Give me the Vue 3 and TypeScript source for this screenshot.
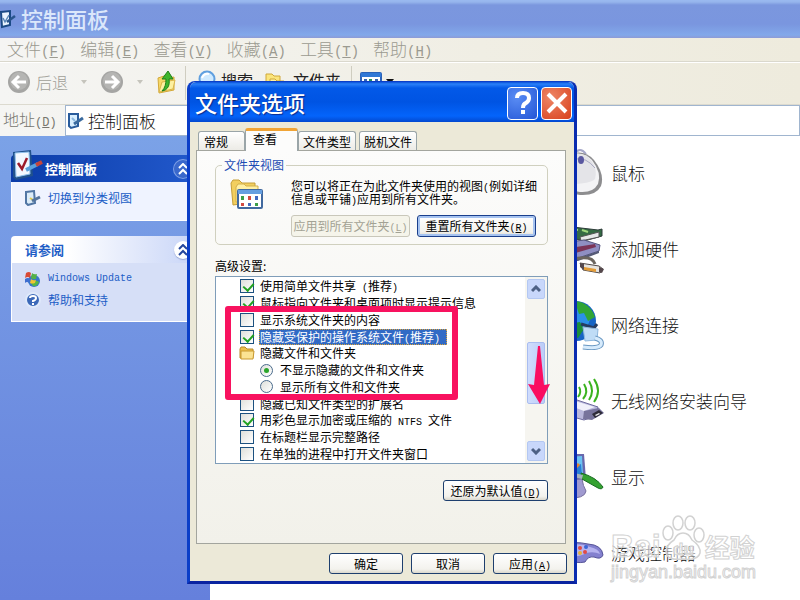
<script setup lang="ts">
import { ref } from 'vue'

interface Part { text: string; latin?: boolean }
interface Option {
  id: string
  kind: 'check' | 'radio' | 'folder'
  parts: Part[]
  checked?: boolean
  selected?: boolean
}

const menus = [
  { label: '文件', key: 'F' },
  { label: '编辑', key: 'E' },
  { label: '查看', key: 'V' },
  { label: '收藏', key: 'A' },
  { label: '工具', key: 'T' },
  { label: '帮助', key: 'H' },
]

const items = [
  { id: 'mouse', label: '鼠标' },
  { id: 'hardware', label: '添加硬件' },
  { id: 'network', label: '网络连接' },
  { id: 'wireless', label: '无线网络安装向导' },
  { id: 'display', label: '显示' },
  { id: 'game', label: '游戏控制器' },
]

const tabs = ['常规', '查看', '文件类型', '脱机文件']
const activeTab = ref('查看')

const options = ref<Option[]>([
  { id: 'share', kind: 'check', checked: true, parts: [{ text: '使用简单文件共享' }, { text: ' (', latin: true }, { text: '推荐' }, { text: ')', latin: true }] },
  { id: 'tips', kind: 'check', checked: true, parts: [{ text: '鼠标指向文件夹和桌面项时显示提示信息' }] },
  { id: 'system', kind: 'check', checked: false, parts: [{ text: '显示系统文件夹的内容' }] },
  { id: 'protected', kind: 'check', checked: true, selected: true, parts: [{ text: '隐藏受保护的操作系统文件' }, { text: '(', latin: true }, { text: '推荐' }, { text: ') ', latin: true }] },
  { id: 'hidden', kind: 'folder', parts: [{ text: '隐藏文件和文件夹' }] },
  { id: 'hide', kind: 'radio', parts: [{ text: '不显示隐藏的文件和文件夹' }] },
  { id: 'show', kind: 'radio', parts: [{ text: '显示所有文件和文件夹' }] },
  { id: 'ext', kind: 'check', checked: false, parts: [{ text: '隐藏已知文件类型的扩展名' }] },
  { id: 'ntfs', kind: 'check', checked: true, parts: [{ text: '用彩色显示加密或压缩的' }, { text: ' NTFS ', latin: true }, { text: '文件' }] },
  { id: 'path', kind: 'check', checked: false, parts: [{ text: '在标题栏显示完整路径' }] },
  { id: 'process', kind: 'check', checked: false, parts: [{ text: '在单独的进程中打开文件夹窗口' }] },
])
const hiddenMode = ref('hide')
const address = ref('控制面板')
</script>

<template>
  <div class="desktop">
    <header class="titlebar">
      <svg class="title-icon" viewBox="0 0 16 20">
        <path d="M1 3 L10 2 V16 L2 18 Z" fill="#eaf4ff" stroke="#1b4a86" stroke-width="2" />
        <path d="M3 9 L5 13 L9 6" fill="none" stroke="#5b87b8" stroke-width="1.5" />
        <path d="M7 13 L15 7" stroke="#28548c" stroke-width="2.5" />
      </svg>
      <h1>控制面板</h1>
    </header>

    <nav class="menubar">
      <button v-for="m in menus" :key="m.key" type="button">{{ m.label }}<span class="latin">(<u>{{ m.key }}</u>)</span></button>
    </nav>

    <div class="toolbar">
      <button class="tool back" type="button" aria-label="后退">
        <svg width="24" height="24" viewBox="0 0 24 24">
          <circle cx="12" cy="12" r="11" fill="#a5a5a3" /><circle cx="12" cy="11" r="9" fill="#b5b5b3" />
          <path d="M19 12 H7 M12 6 L6 12 L12 18" fill="none" stroke="#fff" stroke-width="3" />
        </svg>
        <span>后退</span>
      </button>
      <i class="caret"></i>
      <button class="tool forward" type="button" aria-label="前进">
        <svg width="24" height="24" viewBox="0 0 24 24">
          <circle cx="12" cy="12" r="11" fill="#a5a5a3" /><circle cx="12" cy="11" r="9" fill="#b5b5b3" />
          <path d="M5 12 H17 M12 6 L18 12 L12 18" fill="none" stroke="#fff" stroke-width="3" />
        </svg>
      </button>
      <i class="caret"></i>
      <button class="tool up" type="button" aria-label="向上">
        <svg width="22" height="24" viewBox="0 0 22 24">
          <path d="M2 8 L8 6 L10 8 L18 7 V20 L3 23 Z" fill="#f6d867" stroke="#d3a93a" />
          <path d="M3 22 L6 12 L19 10 L17 19 Z" fill="#fdf0a0" stroke="#dbb548" />
          <path d="M6 21 C12 20 14 15 13 9 L17 9 L12 1 L6 9 L10 9 C10 14 9 18 6 21 Z" fill="#3db52c" stroke="#1f7f1b" />
        </svg>
      </button>
      <i class="divider"></i>
      <button class="tool dark" type="button">
        <svg width="18" height="24" viewBox="0 0 18 24">
          <circle cx="9" cy="9" r="7.5" fill="#cfeaff" stroke="#5f9fdf" stroke-width="2" />
          <path d="M4 8 Q6 3 11 4" stroke="#fff" stroke-width="2" fill="none" />
          <path d="M5 15 L1 22" stroke="#7a6a50" stroke-width="3" />
        </svg>
        <span>搜索</span>
      </button>
      <button class="tool dark folders" type="button">
        <svg width="20" height="20" viewBox="0 0 20 20">
          <path d="M1 2 H7 L9 4 H15 V14 H1 Z" fill="#fbe57c" stroke="#d0a83a" />
          <path d="M5 7 H10 L12 9 H19 V18 H5 Z" fill="#fff0a0" stroke="#d0a83a" />
        </svg>
        <span>文件夹</span>
      </button>
      <i class="divider wide"></i>
      <button class="tool view" type="button" aria-label="视图">
        <svg width="22" height="20" viewBox="0 0 22 20">
          <rect x="1" y="1" width="20" height="18" rx="1" fill="#fff" stroke="#2a62b8" stroke-width="2" />
          <rect x="1" y="1" width="20" height="4" fill="#2f78d6" />
          <path d="M4 7h3v4H4zM15 7h3v4h-3z" fill="#3565b0" /><path d="M9 7h3v4H9z" fill="#25905a" />
          <path d="M4 13h3v3H4zM9 13h3v3H9zM15 13h3v3h-3z" fill="#777" />
        </svg>
      </button>
      <i class="caret solid"></i>
    </div>

    <div class="addressbar">
      <label for="address">地址<span class="latin">(<u>D</u>)</span></label>
      <div class="address-field">
        <svg width="18" height="18" viewBox="0 0 18 18">
          <path d="M2 2 H11 V14 L4 16 L2 14 Z" fill="#d9efff" stroke="#285b9c" stroke-width="2" />
          <path d="M7 12 L16 6" stroke="#3a6a9e" stroke-width="3" />
          <path d="M5 6 L8 9" stroke="#8bb7df" stroke-width="2" />
        </svg>
        <input id="address" v-model="address" type="text" />
      </div>
    </div>

    <div class="content">
      <aside class="sidebar">
        <section class="panel primary">
          <header>
            <svg class="panel-icon" width="34" height="34" viewBox="0 0 34 34">
              <path d="M2 4 L20 2 L22 28 L5 32 L2 29 Z" fill="#21528c" />
              <path d="M4 5 L18 4 L19 26 L5 29 Z" fill="#f2f8ff" stroke="#8fc0ec" />
              <path d="M7 15 L11 21 L16 10" fill="none" stroke="#9c1c2c" stroke-width="2.5" />
              <path d="M15 22 L27 16" stroke="#5aa1dc" stroke-width="4" />
              <path d="M25 17 L31 14" stroke="#c4453a" stroke-width="4" />
            </svg>
            <h2>控制面板</h2>
            <button class="collapse" type="button" aria-label="折叠">
              <svg width="10" height="12" viewBox="0 0 10 12"><path d="M1 5 L5 1 L9 5 M1 11 L5 7 L9 11" fill="none" stroke="currentColor" stroke-width="2" /></svg>
            </button>
          </header>
          <div class="links">
            <a href="#">
              <svg width="16" height="16" viewBox="0 0 16 16">
                <path d="M1 2 L9 1 L10 13 L3 15 L1 13 Z" fill="#dcecf8" stroke="#5176a4" stroke-width="2" />
                <path d="M5 8 L8 10" stroke="#e0c850" stroke-width="2" /><path d="M7 11 L15 7" stroke="#54749c" stroke-width="3" />
              </svg>
              <span>切换到分类视图</span>
            </a>
          </div>
        </section>

        <section class="panel">
          <header>
            <h2>请参阅</h2>
            <button class="collapse" type="button" aria-label="折叠">
              <svg width="10" height="12" viewBox="0 0 10 12"><path d="M1 5 L5 1 L9 5 M1 11 L5 7 L9 11" fill="none" stroke="currentColor" stroke-width="2" /></svg>
            </button>
          </header>
          <div class="links">
            <a href="#">
              <svg width="16" height="16" viewBox="0 0 16 16">
                <circle cx="9" cy="10" r="6" fill="#3977c9" /><path d="M6 12 Q10 8 14 11 Q12 16 8 15Z" fill="#55b848" />
                <path d="M1 2 Q4 0 6 2 L5 7 Q3 5 0 7 Z" fill="#d94a35" /><path d="M7 2 Q9 4 12 3 L11 8 Q8 9 6 7 Z" fill="#56b146" />
                <path d="M0 8 Q3 6 5 8 L4 12 Q2 10 0 12 Z" fill="#3f6fd0" /><path d="M6 8 Q8 10 11 9 L10 12 Q7 13 5 12 Z" fill="#f2c431" />
              </svg>
              <span class="latin">Windows Update</span>
            </a>
            <a href="#">
              <svg width="16" height="16" viewBox="0 0 16 16">
                <circle cx="8" cy="8" r="7" fill="#3b68b8" stroke="#dfe9fa" stroke-width="2" />
                <path d="M5 6 Q5 4 8 4 Q11 4 11 6 Q11 8 8 9 V10 M8 11 V13" fill="none" stroke="#fff" stroke-width="2" />
              </svg>
              <span>帮助和支持</span>
            </a>
          </div>
        </section>
      </aside>

      <main class="tiles">
        <a v-for="item in items" :key="item.id" class="tile" href="#">
          <svg width="44" height="50" viewBox="0 0 44 50">
            <g v-if="item.id === 'mouse'">
              <path d="M14 6 Q20 -2 26 6" fill="none" stroke="#a4a6c8" stroke-width="2" />
              <path d="M2 10 Q22 -2 34 12 Q45 26 41 38 Q36 48 20 47 Q6 45 2 36 Z" fill="#8d8d8f" />
              <path d="M2 10 Q21 0 32 12 Q42 25 38 36 Q33 45 20 44 Q6 42 2 34 Z" fill="#f3f3f5" />
              <path d="M10 8 Q22 2 31 12 Q38 22 35 31 Q30 36 10 36 Z" fill="#e4e4e8" />
              <path d="M16 11 Q26 9 35 20" fill="none" stroke="#aaaac4" />
              <ellipse cx="21" cy="12" rx="3" ry="4" fill="#5a58a0" />
            </g>
            <g v-else-if="item.id === 'hardware'">
              <path d="M4 2 L38 6 L42 5 V12 L24 17 L4 12 Z" fill="#356b44" stroke="#2d3b38" />
              <path d="M20 13 L39 8 V13 L21 17 Z" fill="#e6e8e8" stroke="#555" />
              <path d="M12 5 L18 6 M22 6 L28 8" stroke="#9ed67e" stroke-width="2" />
              <path d="M2 19 L24 16 L40 21 L39 27 L18 34 L2 34 Z" fill="#8f8fc2" stroke="#55557f" />
              <path d="M10 24 L35 20 L36 23 L12 30 Z" fill="#7b3457" /><path d="M2 33 L18 34 L39 27 V29 L18 37 L2 36Z" fill="#555a76" />
              <path d="M10 36 Q32 30 35 40" fill="none" stroke="#6c665f" stroke-width="3" />
              <path d="M20 39 L39 42 L43 45 L40 49 L23 46 Z" fill="#e6e4df" stroke="#514a48" />
              <path d="M24 43 L36 45 V48 L24 46 Z" fill="#e29b37" /><path d="M20 39 L24 40 V46 L20 43 Z M39 43 L44 45 L42 49 L39 48Z" fill="#55484c" />
            </g>
            <g v-else-if="item.id === 'network'">
              <circle cx="16" cy="21" r="20" fill="#1664c4" /><circle cx="14" cy="17" r="16" fill="#2b91e8" />
              <path d="M16 1 Q30 3 35 17 L28 21 L24 13 L19 14 L17 8 Z" fill="#31a536" /><path d="M7 24 L20 22 L24 29 L18 38 L10 36Z" fill="#1b8e3c" />
              <path d="M21 24 L34 28 L37 24" fill="none" stroke="#263c60" stroke-width="3" />
              <path d="M23 27 L38 29 L37 40 L25 41 Z" fill="#bfdcf6" stroke="#8fb8de" />
              <path d="M35 38 Q43 40 41 45 Q38 49 23 47" fill="none" stroke="#6997c2" stroke-width="5" />
              <path d="M35 38 Q43 40 41 45 Q38 49 23 47" fill="none" stroke="#d7ebfc" stroke-width="3" />
            </g>
            <g v-else-if="item.id === 'wireless'">
              <path d="M19 11 Q22 16 18 21 M24 8 Q29 16 23 23 M29 5 Q35 15 29 24 M34 3 Q42 15 34 26" fill="none" stroke="#3bb31f" stroke-width="2" />
              <path d="M2 26 L14 23 L38 31 L36 40 L24 44 L2 38 Z" fill="#b9b8dc" stroke="#6d6a9e" />
              <path d="M3 27 L15 25 L35 31 L24 35 Z" fill="#f0f0fa" />
              <path d="M24 35 L39 32 L44 37 L32 44 L23 43 Z" fill="#77749c" />
              <path d="M32 38 L39 34 L43 37 L35 42 Z" fill="#2e2c38" /><path d="M35 39 L39 37 L40 38 L36 40 Z" fill="#eee" />
            </g>
            <g v-else-if="item.id === 'display'">
              <path d="M5 2 L24 2 L26 27 L5 30 Z" fill="#6868ad" /><path d="M5 5 L22 4 L23 24 L5 26 Z" fill="#6cc3f2" />
              <path d="M15 15 L21 12 L22 23 L15 24 Z" fill="#2880d7" /><path d="M16 15 L19 12" stroke="#e9842f" stroke-width="3" />
              <path d="M8 28 L22 27 Q23 34 26 39 Q25 47 7 46 Z" fill="#a09ad0" stroke="#77709f" />
              <path d="M21 21 Q36 25 43 35 Q42 38 38 36 L22 27 Z" fill="#35a231" stroke="#176b20" />
              <path d="M14 21 L23 23 L22 27 L14 25 Z" fill="#a6b3b9" />
            </g>
            <g v-else>
              <path d="M3 16 Q14 13 28 16 Q42 17 43 27 Q41 32 34 29 Q28 28 25 34 Q16 36 3 31 Z" fill="#8481cf" stroke="#555397" />
              <path d="M4 18 Q20 14 30 19 Q39 21 40 26 Q34 23 26 25 Q20 30 4 27 Z" fill="#b6b3ef" />
              <circle cx="20" cy="20" r="2" fill="#e24b45" /><circle cx="26" cy="19" r="2" fill="#3c66d6" />
              <circle cx="25" cy="24" r="2" fill="#e24b45" /><circle cx="20" cy="25" r="2" fill="#e6b23b" />
            </g>
          </svg>
          <span>{{ item.label }}</span>
        </a>
      </main>
    </div>

    <div class="watermark">
      <div class="brand">
        <span>Bai</span>
        <svg width="44" height="48" viewBox="0 0 44 48">
          <g fill="#fff" fill-opacity="0.5" stroke="#d2d2d2" stroke-width="1.5">
            <ellipse cx="7" cy="19" rx="5" ry="7" /><ellipse cx="17" cy="9" rx="5" ry="7" />
            <ellipse cx="29" cy="9" rx="5" ry="7" /><ellipse cx="38" cy="21" rx="5" ry="7" />
            <path d="M22 19 Q28 19 31 26 Q40 32 39 39 Q37 47 22 45 Q6 47 5 38 Q5 31 13 26 Q16 19 22 19 Z" />
          </g>
          <text x="12" y="41" font-size="17">du</text>
        </svg>
        <span class="cjk">经验</span>
      </div>
      <div class="site">jingyan.baidu.com</div>
    </div>

    <div class="dialog" role="dialog" aria-labelledby="dialog-title">
      <header class="dialog-title">
        <h2 id="dialog-title">文件夹选项</h2>
        <button class="caption" type="button" aria-label="帮助">
          <svg width="28" height="28" viewBox="0 0 28 28">
            <path d="M8 9 Q8 4 14 4 Q20 4 20 9 Q20 12 17 14 Q14 15 14 19 M14 21 V25" fill="none" stroke="#fff" stroke-width="4" />
          </svg>
        </button>
        <button class="caption close" type="button" aria-label="关闭">
          <svg width="28" height="28" viewBox="0 0 28 28"><path d="M5 5 L23 23 M23 5 L5 23" stroke="#fff" stroke-width="4" /></svg>
        </button>
      </header>

      <div class="dialog-body">
        <div class="tabs" role="tablist">
          <button
            v-for="t in tabs" :key="t" type="button" role="tab"
            :class="{ active: t === activeTab }" :aria-selected="t === activeTab" @click="activeTab = t"
          >{{ t }}</button>
        </div>

        <div class="page" role="tabpanel">
          <fieldset>
            <legend>文件夹视图</legend>
            <svg class="views" width="34" height="32" viewBox="0 0 34 32">
              <path d="M1 4 L3 1 H9 L12 4 H25 V23 L3 26 Z" fill="#f2cf5f" stroke="#c59e38" />
              <path d="M6 8 L8 5 H14 L16 7 H28 V23 H6 Z" fill="#fff0a4" stroke="#d3b04c" />
              <rect x="8" y="11" width="24" height="18" rx="1" fill="#fff" stroke="#41699f" stroke-width="2" />
              <rect x="8" y="11" width="24" height="4" fill="#669fe0" />
              <path d="M11 17h3v4h-3zM25 24h3v3h-3z" fill="#3e9e49" /><path d="M18 17h3v4h-3zM11 24h3v3h-3z" fill="#d24a42" /><path d="M25 17h3v4h-3zM18 24h3v3h-3z" fill="#4169c0" />
            </svg>
            <div class="view-info">
              <p>您可以将正在为此文件夹使用的视图<span class="latin">(</span>例如详细信息或平铺<span class="latin">)</span>应用到所有文件夹。</p>
              <div class="view-buttons">
                <button class="xp" type="button" disabled>应用到所有文件夹<span class="latin">(<u>L</u>)</span></button>
                <button class="xp focus" type="button">重置所有文件夹<span class="latin">(<u>R</u>)</span></button>
              </div>
            </div>
          </fieldset>

          <h3>高级设置:</h3>
          <div class="listbox">
            <ul>
              <li v-for="o in options" :key="o.id" :class="o.kind">
                <input v-if="o.kind === 'check'" :id="o.id" v-model="o.checked" type="checkbox" />
                <input v-else-if="o.kind === 'radio'" :id="o.id" v-model="hiddenMode" type="radio" name="hidden-files" :value="o.id" />
                <svg v-else width="16" height="14" viewBox="0 0 16 14">
                  <path d="M1 12 V3 L2 1 H6 L8 3 H14 V12 Z" fill="#edc04c" stroke="#b8892b" />
                  <path d="M2 5 H15 L14 13 H2 Z" fill="#fbe393" stroke="#c8982f" />
                </svg>
                <component :is="o.kind === 'folder' ? 'span' : 'label'" :for="o.kind === 'folder' ? undefined : o.id" :class="['caption-text', { selected: o.selected }]"><span v-for="(p, i) in o.parts" :key="i" :class="{ latin: p.latin }">{{ p.text }}</span></component>
              </li>
            </ul>
            <div class="scrollbar">
              <button type="button" aria-label="向上滚动"><svg width="10" height="8" viewBox="0 0 10 8"><path d="M1 6 L5 2 L9 6" fill="none" stroke="#4d6185" stroke-width="3" /></svg></button>
              <div class="track"><div class="thumb"></div></div>
              <button type="button" aria-label="向下滚动"><svg width="10" height="8" viewBox="0 0 10 8"><path d="M1 2 L5 6 L9 2" fill="none" stroke="#4d6185" stroke-width="3" /></svg></button>
            </div>
            <div class="highlight"></div>
            <svg class="arrow" width="22" height="58" viewBox="0 0 22 58">
              <path d="M10 0 H12 L16 39 L22 38 L12 58 L0 38 L6 39 Z" fill="#fa0d61" />
            </svg>
          </div>
          <button class="xp restore" type="button">还原为默认值<span class="latin">(<u>D</u>)</span></button>
        </div>

        <footer>
          <button class="xp" type="button">确定</button>
          <button class="xp" type="button">取消</button>
          <button class="xp" type="button">应用<span class="latin">(<u>A</u>)</span></button>
        </footer>
      </div>
    </div>
  </div>
</template>

<style>
body { margin: 0; }
</style>

<style scoped>
* { box-sizing: border-box; }
.desktop {
  position: relative;
  display: flex;
  flex-direction: column;
  min-height: 100vh;
  overflow: hidden;
  background: #fff;
  font-family: "Noto Sans CJK SC", sans-serif;
  font-size: 12px;
  color: #000;
}
button {
  margin: 0;
  padding: 0;
  border: 0;
  background: none;
  font: inherit;
  color: inherit;
  white-space: nowrap;
}
h1, h2, h3, p, ul { margin: 0; padding: 0; font-weight: normal; }
a { color: inherit; text-decoration: none; }
svg { flex: none; }
.latin { font-family: "Liberation Mono", monospace; font-size: 10px; line-height: 1; white-space: pre; }

.titlebar {
  display: flex;
  align-items: center;
  gap: 5px;
  height: 38px;
  background: linear-gradient(#9abaf0 0, #96b5ec 2px, #7b97de 5px, #7a96df 24px, #82a8ea 35px, #8d9bd6 38px);
}
.title-icon { width: 16px; height: 20px; }
.titlebar h1 { font-size: 22px; line-height: 34px; padding-bottom: 2px; font-weight: 500; color: #dbe7fb; }

.menubar, .toolbar, .addressbar { background: linear-gradient(90deg, #f5f5f3, #f0eee4 60%, #eeebdd); }
.menubar {
  display: flex;
  align-items: center;
  gap: 14px;
  height: 24px;
  padding: 0 0 2px 7px;
  border-bottom: 1px solid #dad8cd;
  font-size: 17px;
  line-height: 20px;
  font-weight: 300;
  color: #9b9a90;
}
.menubar .latin { font-size: 14px; }

.toolbar {
  display: flex;
  align-items: center;
  height: 42px;
  padding: 0 0 4px 7px;
  border-top: 1px solid #fff;
  font-size: 16px;
  line-height: 20px;
  font-weight: 300;
  color: #a09f97;
}
.tool { display: flex; align-items: center; gap: 5px; }
.caret { width: 0; height: 0; margin: 0 13px; border: 3px solid transparent; border-top: 4px solid #c5c4bc; border-bottom: 0; }
.caret.solid { margin: 0 4px; border-width: 4px; border-top: 5px solid #111; border-bottom: 0; }
.divider { align-self: stretch; margin: 3px 8px 0 7px; border-left: 1px solid #cfcdc0; }
.divider.wide { margin-left: 10px; }
.dark { margin-left: 4px; color: #222; }
.dark span { font-weight: 400; padding-bottom: 4px; }
.folders { margin-left: 12px; gap: 8px; }

.addressbar {
  display: flex;
  align-items: stretch;
  height: 32px;
  border-top: 1px solid #dcdacf;
  font-size: 17px;
  font-weight: 300;
}
.addressbar label { padding-left: 3px; line-height: 28px; color: #77766f; font-size: 16px; width: 65px; white-space: nowrap; }
.addressbar label .latin { font-size: 12px; }
.address-field {
  display: flex;
  flex: 1;
  align-items: center;
  gap: 3px;
  padding-left: 1px;
  border: 1px solid #a0b5cf;
  background: #fff;
}
.address-field input { flex: 1; min-width: 0; padding: 0; border: 0; outline: 0; background: none; font: inherit; color: #111; }

.content { display: flex; flex: 1; }
.sidebar {
  flex: 0 0 210px;
  padding: 19px 12px 0 11px;
  background: linear-gradient(#7ba2e7, #6580dc);
}
.panel { margin-bottom: 15px; }
.panel header {
  display: flex;
  align-items: center;
  height: 27px;
  padding: 0 6px 0 14px;
  border-radius: 4px 4px 0 0;
  background: linear-gradient(90deg, #fff 30%, #c7d4f7);
  color: #215dc6;
}
.panel h2 { flex: 1; font-size: 13px; font-weight: 700; }
.panel.primary header { padding-left: 0; background: linear-gradient(90deg, #0b3ca8, #2259cc); color: #fff; }
.panel-icon { margin-top: -8px; }
.collapse { display: grid; place-items: center; width: 18px; height: 18px; border-radius: 50%; background: #fff; color: #24469c; box-shadow: 0 1px 1px #99a8d8; }
.primary .collapse { background: #3a68cc; color: #fff; box-shadow: 0 0 0 1px #7f9fe4; }
.links { display: flex; flex-direction: column; gap: 5px; padding: 8px 13px 13px; border: 1px solid #fff; border-top: 0; background: #d6dff7; color: #215dc6; }
.primary .links { background: #eff3ff; padding-bottom: 14px; }
.links a { display: flex; align-items: center; gap: 7px; height: 16px; line-height: 16px; }

.tiles { flex: 1; margin-top: -1px; padding-left: 350px; }
.tile { display: flex; align-items: center; gap: 7px; height: 76px; font-size: 17px; line-height: 22px; font-weight: 300; color: #111; white-space: nowrap; }

.watermark { position: absolute; right: 44px; bottom: 18px; font-family: "Liberation Sans", sans-serif; color: rgba(255, 255, 255, 0.6); -webkit-text-stroke: 1px #d2d2d2; }
.brand { display: flex; align-items: flex-end; font-size: 32px; line-height: 32px; font-weight: 700; }
.brand text { fill: #fff; fill-opacity: 0.6; stroke: #d2d2d2; stroke-width: 1px; }
.brand .cjk { font-family: "Noto Sans CJK SC", sans-serif; font-size: 25px; }
.site { font-size: 18px; line-height: 20px; }

.dialog {
  position: absolute;
  left: 187px;
  top: 81px;
  width: 390px;
  border: 3px solid #0b3ec8;
  border-top-width: 1px;
  border-right-color: #0a2cb0;
  border-bottom-color: #0a24a0;
  border-radius: 8px 8px 0 0;
  background: #ece9d8;
}
.dialog-title {
  display: flex;
  align-items: center;
  gap: 3px;
  height: 40px;
  padding: 2px 2px 0 5px;
  border-radius: 6px 6px 0 0;
  background: linear-gradient(#0a50d8 0, #2a80f8 2px, #0359e8 6px, #0054e3 20px, #0464fb 34px, #0348cf 40px);
}
.dialog-title h2 { flex: 1; padding-bottom: 3px; font-size: 22px; line-height: 34px; font-weight: 500; color: #fff; text-shadow: 1px 1px 1px #0a2c90; }
.caption { width: 31px; height: 33px; display: grid; place-items: center; border: 1px solid #fff; border-radius: 4px; background: radial-gradient(circle at 30% 30%, #5a8df4, #2355d6); }
.caption.close { background: radial-gradient(circle at 30% 30%, #ee8666, #d8401c); }

.dialog-body { padding: 6px 8px 7px 6px; }
.tabs { display: flex; align-items: flex-end; height: 22px; padding-left: 2px; }
.tabs button {
  position: relative;
  height: 19px;
  margin-right: 3px;
  padding: 0 4px;
  border: 1px solid #9aa5a8;
  border-bottom: 0;
  border-radius: 3px 3px 0 0;
  background: linear-gradient(#fff, #ecebe6);
  line-height: 17px;
}
.tabs button:first-child { margin-right: 0; padding: 0 16px 0 5px; }
.tabs button.active { z-index: 1; height: 23px; margin: 0 0 -1px; padding: 0 20px 5px 7px; border-top: 3px solid #f0a436; background: #fcfcfb; line-height: 15px; }
.page {
  display: flex;
  flex-direction: column;
  height: 394px;
  padding: 6px 17px 0 18px;
  border: 1px solid #a3a59e;
  background: linear-gradient(#fcfcfb, #f2f1ea);
}
fieldset {
  display: flex;
  gap: 27px;
  height: 88px;
  min-width: 0;
  margin: 0;
  padding: 6px 8px 0 14px;
  border: 1px solid #d0d0bf;
  border-radius: 5px;
}
legend { margin-left: -8px; padding: 0 2px; line-height: 16px; color: #1d4cb4; }
.view-info { flex: 1; }
.view-info p { line-height: 13px; }
.view-info p .latin { line-height: 0; }
.view-buttons { display: flex; gap: 7px; margin-top: 10px; }
.xp {
  height: 21px;
  border: 1px solid #1e3f6e;
  border-radius: 3px;
  background: linear-gradient(#fff, #f3f2ed 80%, #dad7cc);
  line-height: 18px;
  text-align: center;
}
.view-buttons .xp { width: 119px; height: 22px; }
.xp:disabled { border-color: #c9c7ba; background: #f5f4ea; color: #a3a294; }
.xp.focus { box-shadow: inset 0 0 0 2px #a6c3f0; border-color: #1a3f8c; }
h3 { margin-top: 12px; font-size: 12px; line-height: 18px; }
.listbox {
  position: relative;
  display: flex;
  height: 188px;
  margin-top: 1px;
  border: 1px solid #7f9db9;
  background: #fff;
}
.listbox ul { display: flex; flex: 1; flex-direction: column; padding: 1px 0 1px 24px; list-style: none; }
.listbox li { display: flex; flex: 1; align-items: center; gap: 5px; min-height: 0; white-space: nowrap; }
.listbox li.radio { padding-left: 20px; gap: 6px; }
.listbox li.folder { gap: 4px; }
.listbox li.folder svg { margin-left: -1px; }
.caption-text { display: flex; align-items: baseline; height: 16px; padding: 0 1px; line-height: 16px; }
.caption-text.selected { background: #316ac5; color: #fff; outline: 1px dotted #d9a23c; outline-offset: -1px; }
.listbox input { appearance: none; position: relative; flex: none; width: 14px; height: 14px; margin: 0; border: 1px solid #1c5180; background: linear-gradient(135deg, #dedfda, #fff); }
.listbox input[type="radio"] { width: 13px; height: 13px; border-radius: 50%; border-color: #4a6b8c; }
.listbox input[type="checkbox"]:checked::before { content: ""; position: absolute; left: 4px; top: 1px; width: 5px; height: 8px; border: solid #21a121; border-width: 0 2px 2px 0; transform: rotate(42deg); }
.listbox input[type="radio"]:checked::before { content: ""; position: absolute; inset: 3px; border-radius: 50%; background: #2aa52a; }

.scrollbar { display: flex; flex-direction: column; width: 22px; padding: 2px; background: #f6f5f0; }
.scrollbar button { display: grid; place-items: center; height: 20px; border: 1px solid #b4c8f2; border-radius: 2px; background: #c8d7fb; }
.track { flex: 1; padding-top: 43px; }
.thumb { height: 62px; border: 1px solid #a9bdf0; border-radius: 2px; background: linear-gradient(90deg, #cfdcfd, #bccdf8); }
.highlight { position: absolute; left: 9px; top: 29px; width: 233px; height: 94px; border: 6px solid #f8125f; border-radius: 3px; }
.arrow { position: absolute; right: -3px; top: 69px; }
.restore { align-self: flex-end; width: 105px; margin-top: 16px; }
footer { display: flex; justify-content: flex-end; gap: 8px; padding-top: 9px; margin-right: -1px; }
footer .xp { width: 74px; }
</style>
